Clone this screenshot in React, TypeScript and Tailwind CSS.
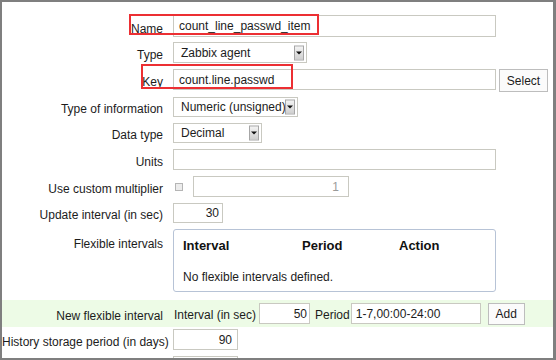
import type { ReactNode } from 'react';

function Label({ children, className = '' }: { children: ReactNode; className?: string }) {
  return (
    <div className={`w-[161px] shrink-0 whitespace-nowrap text-right text-[12px] text-[#1c1c1c] ${className}`}>
      {children}
    </div>
  );
}

function Arrow() {
  return (
    <div className="absolute right-[2px] top-1/2 flex h-[15px] w-[10px] -translate-y-1/2 items-center justify-center border border-[#a6a6a6] bg-gradient-to-b from-[#f4f4f4] to-[#cfcfcf]">
      <div className="h-0 w-0 border-x-[3px] border-t-[3px] border-x-transparent border-t-[#111]" />
    </div>
  );
}

export default function App() {
  return (
    <div className="relative h-[360px] w-[556px] overflow-hidden border-b-2 border-l-2 border-r-[3px] border-t-2 border-[#7f7f7f] bg-white font-['Liberation_Sans',Arial,sans-serif] text-[12px] text-[#1c1c1c]">
      <div className="flex flex-col">
        <div className="mt-[13px] flex h-[22px] items-center">
          <Label className="pt-[5px]">Name</Label>
          <div className="ml-[10px] flex h-[22px] w-[323px] items-center border border-[#c9c9c1] pl-[5px]">
            count_line_passwd_item
          </div>
        </div>

        <div className="mt-[5px] flex h-[21px] items-center">
          <Label className="pt-[4px]">Type</Label>
          <div className="relative ml-[10px] flex h-[21px] w-[134px] items-center border border-[#c9c9c1] pl-[7px]">
            Zabbix agent
            <Arrow />
          </div>
        </div>

        <div className="mt-[6px] flex h-[23px] items-start">
          <Label className="flex h-[21px] items-center justify-end pt-[5px]">Key</Label>
          <div className="ml-[10px] flex h-[21px] w-[323px] items-center border border-[#c9c9c1] pl-[5px]">
            count.line.passwd
          </div>
          <div className="ml-[3px] flex h-[23px] w-[49px] items-center justify-center border border-[#bdbdbd] bg-[#fbfbfb]">
            Select
          </div>
        </div>

        <div className="mt-[5px] flex h-[20px] items-center">
          <Label className="pt-[4px]">Type of information</Label>
          <div className="relative ml-[10px] flex h-[20px] w-[125px] items-center border border-[#c9c9c1] pl-[7px]">
            Numeric (unsigned)
            <Arrow />
          </div>
        </div>

        <div className="mt-[6px] flex h-[20px] items-center">
          <Label className="pt-[4px]">Data type</Label>
          <div className="relative ml-[10px] flex h-[20px] w-[89px] items-center border border-[#c9c9c1] pl-[7px]">
            Decimal
            <Arrow />
          </div>
        </div>

        <div className="mt-[6px] flex h-[21px] items-center">
          <Label className="pt-[4px]">Units</Label>
          <div className="ml-[10px] h-[21px] w-[323px] border border-[#c9c9c1]" />
        </div>

        <div className="mt-[6px] flex h-[21px] items-center">
          <Label className="pt-[4px]">Use custom multiplier</Label>
          <div className="ml-[12px] h-[8px] w-[8px] border border-[#b5b5b5] bg-[#ececec]" />
          <div className="ml-[10px] flex h-[21px] w-[156px] items-center justify-end border border-[#c9c9c1] pr-[9px] text-[#9a9a9a]">
            1
          </div>
        </div>

        <div className="mt-[6px] flex h-[20px] items-center">
          <Label className="pt-[4px]">Update interval (in sec)</Label>
          <div className="ml-[10px] flex h-[20px] w-[50px] items-center justify-end border border-[#c9c9c1] pr-[3px]">
            30
          </div>
        </div>

        <div className="mt-[6px] flex items-start">
          <Label className="pt-[6px]">Flexible intervals</Label>
          <div className="ml-[10px] h-[63px] w-[323px] rounded-[3px] border border-[#b7c3d6] pl-[9px] pt-[6px]">
            <div className="grid grid-cols-[119px_97px_auto] text-[13px] font-bold text-[#111]">
              <span>Interval</span>
              <span>Period</span>
              <span>Action</span>
            </div>
            <div className="mt-[12px]">No flexible intervals defined.</div>
          </div>
        </div>

        <div className="mt-[8px] flex h-[27px] items-center bg-[#edfbe6]">
          <Label className="pt-[4px]">New flexible interval</Label>
          <span className="ml-[11px] pt-[2px]">Interval (in sec)</span>
          <div className="ml-[3px] flex h-[21px] w-[51px] items-center justify-end border border-[#c9c9c1] bg-white pr-[2px]">
            50
          </div>
          <span className="ml-[5px] pt-[2px]">Period</span>
          <div className="ml-[1px] flex h-[21px] w-[130px] items-center border border-[#c9c9c1] bg-white pl-[4px]">
            1-7,00:00-24:00
          </div>
          <div className="ml-[7px] flex h-[22px] w-[37px] items-center justify-center border border-[#bdbdbd] bg-[#fbfbfb]">
            Add
          </div>
        </div>

        <div className="mt-[2px] flex h-[21px] items-center">
          <Label className="pt-[4px]">History storage period (in days)</Label>
          <div className="ml-[10px] flex h-[21px] w-[65px] items-center justify-end border border-[#c9c9c1] pr-[5px]">
            90
          </div>
        </div>

        <div className="mt-[6px] flex h-[21px] items-center">
          <div className="w-[161px] shrink-0" />
          <div className="ml-[10px] h-[21px] w-[65px] border border-[#c9c9c1]" />
        </div>
      </div>

      <div className="absolute left-[127px] top-[12px] h-[21px] w-[190px] border-2 border-[#ec2f33]" />
      <div className="absolute left-[139px] top-[62px] h-[25px] w-[152px] border-2 border-[#ec2f33]" />
    </div>
  );
}
